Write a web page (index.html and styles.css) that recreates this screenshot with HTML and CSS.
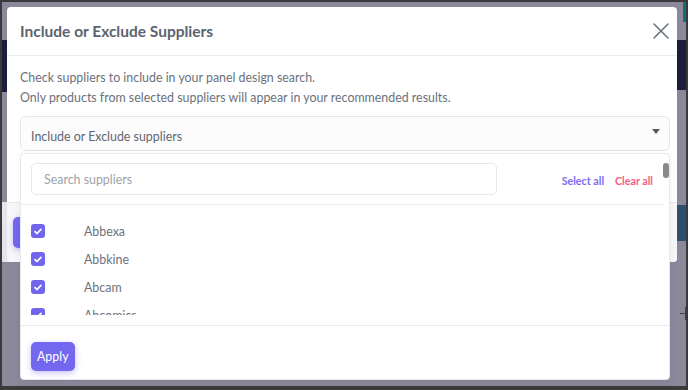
FILE: index.html
```html
<!DOCTYPE html>
<html lang="en">
<head>
  <meta charset="UTF-8">
  <title>Include or Exclude Suppliers</title>
  <meta name="viewport" content="width=device-width, initial-scale=1.0">
  <link rel="stylesheet" href="styles.css">
</head>
<body>
  <div class="frame">
    <div class="page-bg">
      <div class="bg-block bg-left-nav"></div>
      <div class="bg-block bg-left-card"></div>
      <div class="bg-block bg-right-top"></div>
      <div class="bg-block bg-right-nav"></div>
      <div class="bg-block bg-right-mid"></div>
      <div class="bg-plus"></div>
    </div>

    <div class="modal">
      <header class="modal-header">
        <h2>Include or Exclude Suppliers</h2>
        <button class="close" aria-label="Close">
          <svg width="16" height="16" viewBox="0 0 16 16">
            <path d="M1 1L15 15M15 1L1 15" stroke="#6b7280" stroke-width="1.6" fill="none" stroke-linecap="round"/>
          </svg>
        </button>
      </header>

      <div class="modal-body">
        <p class="hint">Check suppliers to include in your panel design search.<br>Only products from selected suppliers will appear in your recommended results.</p>

        <div class="select-wrap">
          <div class="select">
            <span>Include or Exclude suppliers</span>
            <span class="caret"></span>
          </div>

          <div class="dropdown">
            <div class="scroll-thumb"></div>
            <div class="dd-top">
              <input class="search" type="text" placeholder="Search suppliers">
              <div class="dd-actions">
                <a class="select-all">Select all</a>
                <a class="clear-all">Clear all</a>
              </div>
            </div>
            <div class="dd-list">
              <ul id="supplierList"></ul>
            </div>
            <div class="dd-footer">
              <button class="btn-primary">Apply</button>
            </div>
          </div>
        </div>
      </div>

      <footer class="modal-footer">
        <button class="btn-primary btn-hidden" aria-label="Save"></button>
      </footer>
    </div>
  </div>

  <script>
    const suppliers = ["Abbexa", "Abbkine", "Abcam", "Abcomics"];
    const list = document.getElementById("supplierList");

    suppliers.forEach(name => {
      const li = document.createElement("li");
      const box = document.createElement("span");
      box.className = "checkbox";
      box.innerHTML = '<svg width="8" height="7" viewBox="0 0 8 7"><path d="M1 3.6L3 5.5L7 1.3" stroke="#fff" stroke-width="1.7" fill="none" stroke-linecap="round" stroke-linejoin="round"/></svg>';
      const label = document.createElement("span");
      label.className = "label";
      label.textContent = name;
      li.appendChild(box);
      li.appendChild(label);
      list.appendChild(li);
    });
  </script>
</body>
</html>
```

FILE: styles.css
```css
* { box-sizing: border-box; }
body {
  margin: 0;
  font-family: Lato, "Open Sans", sans-serif;
  background: #3a3a3c;
}
.frame {
  position: relative;
  width: 688px;
  height: 390px;
  border: 2px solid #3a3a3c;
  border-bottom-width: 4px;
  background: #8b889a;
  padding: 5px 0 0 5px;
  overflow: hidden;
}
.page-bg .bg-block {
  position: absolute;
}
.bg-left-nav {
  left: 0;
  top: 38px;
  width: 6px;
  height: 52px;
  background: #1c1d3b;
}
.bg-left-card {
  left: 0;
  top: 200px;
  width: 8px;
  height: 60px;
  background: #e4e4ea;
}
.bg-right-top {
  right: 0;
  top: 0;
  width: 3px;
  height: 20px;
  background: #14706e;
}
.bg-right-nav {
  right: 0;
  top: 38px;
  width: 10px;
  height: 50px;
  background: #1c1d3b;
}
.bg-right-mid {
  right: 0;
  top: 203px;
  width: 10px;
  height: 36px;
  background: #2d4f6e;
}
.bg-plus {
  position: absolute;
  right: 0;
  top: 302px;
  width: 8px;
  height: 20px;
  overflow: hidden;
}
.bg-plus::before,
.bg-plus::after {
  content: "";
  position: absolute;
  background: #3f3f4d;
}
.bg-plus::before { left: 2px; top: 9px; width: 12px; height: 1px; }
.bg-plus::after { left: 7px; top: 3px; width: 1px; height: 13px; }

.modal {
  position: relative;
  width: 670px;
  height: 255px;
  background: #fff;
  border-radius: 4px;
  display: flex;
  flex-direction: column;
}
.modal-header {
  height: 49px;
  display: flex;
  align-items: center;
  justify-content: space-between;
  padding: 0 6px 0 13px;
  border-bottom: 1px solid #e9eaee;
}
.modal-header h2 {
  margin: 0;
  font-size: 15.5px;
  font-weight: 700;
  color: #5c6370;
}
.close {
  border: none;
  background: none;
  padding: 0;
  width: 16px;
  height: 16px;
  margin-right: 2px;
  display: flex;
}
.modal-body {
  height: 146px;
  padding: 12px 7px 0 13px;
}
.hint {
  margin: 0 0 8px;
  font-size: 12.4px;
  line-height: 20px;
  color: #6b717c;
}
.select-wrap {
  position: relative;
}
.select {
  height: 35px;
  border: 1px solid #e6e7eb;
  border-radius: 5px;
  background: #fcfcfd;
  display: flex;
  align-items: center;
  justify-content: space-between;
  padding: 5px 9px 0 10px;
  font-size: 12.4px;
  color: #5f6570;
}
.caret {
  width: 0;
  height: 0;
  border-left: 4px solid transparent;
  border-right: 4px solid transparent;
  border-top: 5px solid #555a63;
  margin-top: -9px;
}

.dropdown {
  position: absolute;
  top: 37px;
  left: 0;
  width: 650px;
  height: 227px;
  background: #fff;
  border: 1px solid #e7e8ec;
  border-radius: 4px;
  box-shadow: 0 2px 8px rgba(0,0,0,0.06);
  z-index: 10;
  display: flex;
  flex-direction: column;
}
.scroll-thumb {
  position: absolute;
  right: 0;
  top: 9px;
  width: 6px;
  height: 15px;
  border-radius: 3px;
  background: #8a8a8c;
}
.dd-top {
  display: flex;
  align-items: center;
  padding: 9px 0 9px 10px;
  margin-right: 6px;
  border-bottom: 1px solid #e9eaee;
}
.search {
  width: 466px;
  height: 32px;
  border: 1px solid #e6e7eb;
  border-radius: 5px;
  padding: 1px 12px 0;
  font-family: inherit;
  font-size: 12.4px;
  color: #5f6570;
  outline: none;
}
.search::placeholder { color: #9ea3ab; }
.dd-actions {
  margin-left: auto;
  margin-right: 10px;
  display: flex;
  gap: 11px;
  font-size: 10.7px;
  font-weight: 700;
  padding-top: 3px;
}
.select-all { color: #7b6cf3; }
.clear-all { color: #fb5a82; }

.dd-list {
  height: 120px;
  padding: 12px 0 10px;
}
.dd-list ul {
  list-style: none;
  margin: 0;
  padding: 0;
  height: 98px;
  overflow: hidden;
}
.dd-list li {
  height: 28px;
  display: flex;
  align-items: center;
  padding-left: 10px;
}
.checkbox {
  width: 14px;
  height: 14px;
  border-radius: 3px;
  background: #7165ee;
  display: flex;
  align-items: center;
  justify-content: center;
}
.label {
  margin-left: 39px;
  font-size: 12.4px;
  color: #6b717c;
}
.dd-footer {
  border-top: 1px solid #e9eaee;
  padding: 16px 10px 0;
}
.btn-primary {
  height: 29px;
  padding: 0 6px;
  border: none;
  border-radius: 5px;
  background: #7367f0;
  color: #fff;
  font-family: inherit;
  font-size: 12.4px;
  box-shadow: 0 2px 6px rgba(115,103,240,0.4);
}

.modal-footer {
  flex: 1;
  border-top: 1px solid #e9eaee;
  padding: 14px 6px 0;
  background: #f7f7f9;
  border-radius: 0 0 4px 4px;
}
.btn-hidden {
  height: 31px;
  width: 60px;
}
```
